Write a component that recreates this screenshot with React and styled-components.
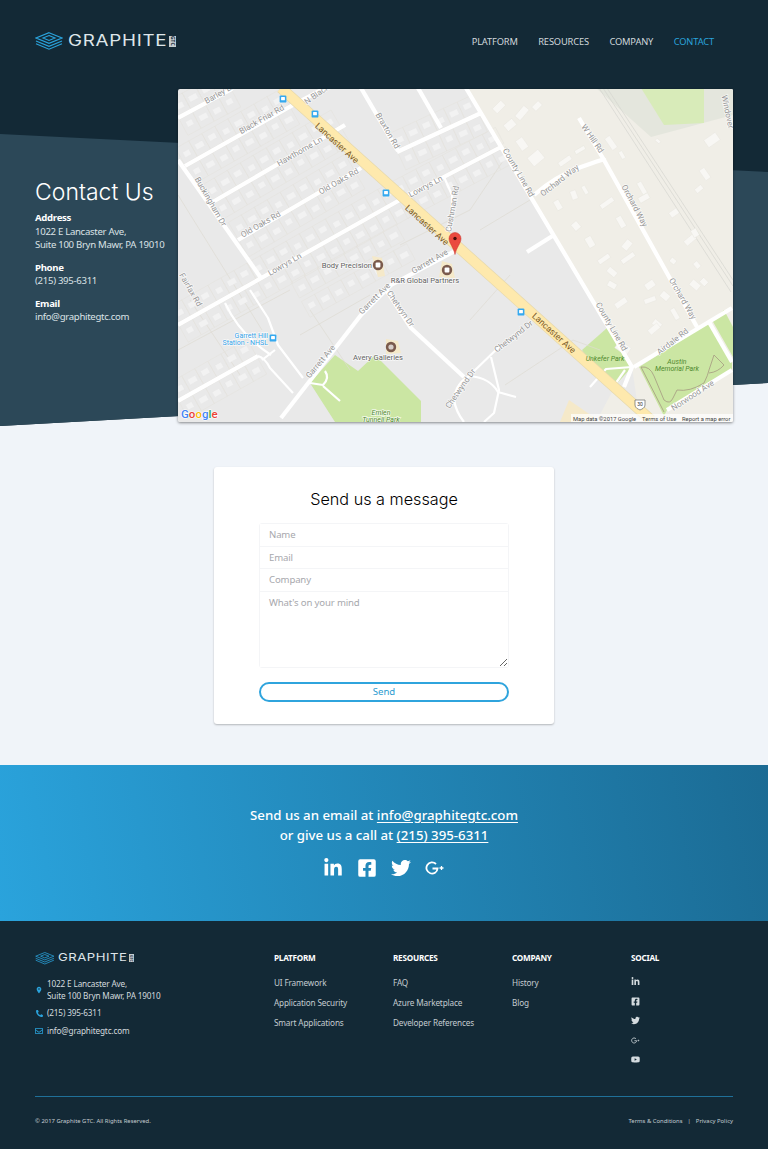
import styled, { createGlobalStyle } from "styled-components";
import {
	FaLinkedinIn,
	FaFacebookSquare,
	FaTwitter,
	FaYoutube,
	FaPhone,
	FaRegEnvelope,
} from "react-icons/fa";
import { MdLocationOn } from "react-icons/md";

const GlobalStyle = createGlobalStyle`
	* { box-sizing: border-box; }
	body {
		margin: 0;
		background: #f0f4f9;
		font-family: "Noto Sans", "Open Sans", sans-serif;
		color: #fff;
	}
	a { color: inherit; text-decoration: none; }
`;

const navItems = ["PLATFORM", "RESOURCES", "COMPANY", "CONTACT"];

const footerColumns = [
	{ title: "PLATFORM", links: ["UI Framework", "Application Security", "Smart Applications"] },
	{ title: "RESOURCES", links: ["FAQ", "Azure Marketplace", "Developer References"] },
	{ title: "COMPANY", links: ["History", "Blog"] },
];

const Hero = styled.section`
	position: relative;
	height: 426px;

	&::before,
	&::after {
		content: "";
		position: absolute;
		inset: 0;
	}
	&::before {
		background: #132936;
		clip-path: polygon(0 0, 100% 0, 100% 383px, 0 426px);
	}
	&::after {
		background: #2c4858;
		clip-path: polygon(0 134px, 100% 172px, 100% 383px, 0 426px);
	}
`;
const HeroInner = styled.div`
	position: relative;
	z-index: 1;
`;
const Header = styled.header`
	display: flex;
	align-items: flex-start;
	justify-content: space-between;
	height: 89px;
	padding: 32px 54px 0 35px;
`;
const LogoWrap = styled.div`
	display: flex;
	align-items: center;
	height: ${(p) => p.$size * 18}px;
	gap: ${(p) => p.$size * 5}px;
`;
const LogoWord = styled.span`
	display: inline-block;
	width: ${(p) => p.$size * 100}px;
	font-family: "Inter", sans-serif;
	font-weight: 400;
	font-size: ${(p) => p.$size * 15.4}px;
	line-height: 1;
	letter-spacing: ${(p) => p.$size * 0.6}px;
	color: #dfe6ea;
	transform: scaleX(1.22);
	transform-origin: left center;
	white-space: nowrap;
`;
const LogoBadge = styled.span`
	display: flex;
	align-items: center;
	justify-content: center;
	margin-left: ${(p) => p.$size * -4}px;
	width: ${(p) => p.$size * 7}px;
	height: ${(p) => p.$size * 11}px;
	background: #c6ced2;
	color: #132936;
	font-size: ${(p) => p.$size * 5}px;
	font-weight: 700;
	line-height: 1;
	writing-mode: vertical-rl;
	overflow: hidden;
`;
const Nav = styled.nav`
	display: flex;
	gap: 20.5px;
	padding-top: 2px;
`;
const NavLink = styled.a`
	font-size: 9.3px;
	letter-spacing: -0.15px;
	line-height: 16px;
	color: ${(p) => (p.$active ? "#2aa3dc" : "#d0d7db")};
`;
const HeroRow = styled.div`
	display: flex;
	padding: 0 35px;
`;
const ContactInfo = styled.div`
	width: 143px;
	padding-top: 89px;
	flex-shrink: 0;
`;
const HeroTitle = styled.h1`
	margin: 0 0 5px;
	font-family: "Inter", sans-serif;
	font-weight: 300;
	font-size: 23px;
	line-height: 28px;
	color: #fff;
	white-space: nowrap;
`;
const InfoBlock = styled.div`
	margin-bottom: 9px;
	font-size: 9.6px;
	letter-spacing: -0.3px;
	line-height: 13.5px;
	color: #dbe2e6;
	white-space: nowrap;
`;
const InfoLabel = styled.div`
	font-weight: 700;
	color: #fff;
`;
const MapFrame = styled.div`
	width: 555px;
	height: 333px;
	flex-shrink: 0;
	border-radius: 2px;
	overflow: hidden;
	box-shadow: 0 1px 3px rgba(0, 0, 0, 0.45);
	line-height: 0;
`;
const FormSection = styled.section`
	display: flex;
	justify-content: center;
	padding: 41px 0;
`;
const FormCard = styled.form`
	width: 340px;
	height: 257px;
	padding: 20px 45px 0;
	background: #fff;
	border-radius: 3px;
	box-shadow: 0 1px 2px rgba(0, 0, 0, 0.25);
`;
const FormTitle = styled.h2`
	margin: 0 0 12px;
	font-family: "Inter", sans-serif;
	font-weight: 300;
	font-size: 16.2px;
	line-height: 24px;
	text-align: center;
	color: #000;
`;
const FieldGroup = styled.div`
	display: flex;
	flex-direction: column;
	border: 1px solid #f4f5f7;
	border-radius: 3px;
`;
const fieldStyles = `
	display: block;
	width: 100%;
	border: 0;
	border-bottom: 1px solid #f4f5f7;
	outline: 0;
	background: #fff;
	padding: 0 9px;
	font-family: "Noto Sans", sans-serif;
	font-size: 9.6px;
	letter-spacing: -0.15px;
	color: #333;
	&::placeholder { color: #a7a8ad; opacity: 1; }
`;
const Input = styled.input`
	${fieldStyles}
	height: 22.6px;
`;
const TextArea = styled.textarea`
	${fieldStyles}
	height: 75px;
	padding-top: 4px;
	line-height: 14px;
	border-bottom: 0;
	resize: vertical;
`;
const SendButton = styled.button`
	display: block;
	width: 100%;
	height: 20px;
	margin-top: 14px;
	padding: 0;
	background: #fff;
	border: 2px solid #2fa4dd;
	border-radius: 10px;
	font-family: "Noto Sans", sans-serif;
	font-size: 9.6px;
	line-height: 16px;
	color: #2a9bd0;
`;
const Cta = styled.section`
	height: 156px;
	padding-top: 40px;
	background: linear-gradient(80deg, #2aa3dc 0%, #1b6b94 100%);
	text-align: center;
`;
const CtaText = styled.p`
	margin: 0;
	font-size: 13.25px;
	line-height: 20px;
	font-weight: 500;
	color: #fff;
`;
const CtaLink = styled.a`
	text-decoration: underline;
	text-underline-offset: 2px;
`;
const CtaSocial = styled.div`
	display: flex;
	justify-content: center;
	align-items: center;
	gap: 14px;
	margin-top: 13px;
	font-size: 20px;
	line-height: 0;
`;
const Footer = styled.footer`
	height: 228px;
	padding: 31px 35px 0;
	background: #132936;
`;
const FooterTop = styled.div`
	display: grid;
	grid-template-columns: 239px 119px 119px 119px 1fr;
	height: 144px;
`;
const ContactList = styled.ul`
	list-style: none;
	margin: 13px 0 0;
	padding: 0;
	display: flex;
	flex-direction: column;
	gap: 5.5px;
`;
const ContactRow = styled.li`
	display: flex;
	align-items: center;
	gap: 4px;
	font-size: 8.2px;
	letter-spacing: -0.15px;
	line-height: 12px;
	color: #d4dbdf;
	white-space: nowrap;
`;
const ContactIcon = styled.span`
	display: flex;
	justify-content: center;
	width: 8px;
	font-size: ${(p) => p.$size}px;
	color: #2aa3dc;
	line-height: 0;
`;
const ColumnTitle = styled.h4`
	margin: 0 0 13px;
	font-size: 8.2px;
	letter-spacing: -0.25px;
	line-height: 12px;
	font-weight: 700;
	color: #fff;
`;
const ColumnLink = styled.a`
	display: block;
	margin-bottom: 7.8px;
	font-size: 8.2px;
	letter-spacing: -0.15px;
	line-height: 12px;
	color: #c4ccd1;
	white-space: nowrap;
`;
const SocialList = styled.div`
	display: flex;
	flex-direction: column;
	gap: 10.6px;
	margin-top: 2px;
	font-size: 9px;
	line-height: 0;
	color: #d4dbdf;
`;
const FooterBottom = styled.div`
	display: flex;
	justify-content: space-between;
	padding-top: 19px;
	border-top: 1px solid #1f7099;
	font-size: 5.9px;
	line-height: 10px;
	color: #c4ccd1;
`;
const Divider = styled.span`
	margin: 0 5px;
`;

function LogoMark({ size }) {
	return (
		<svg width={28 * size} height={18 * size} viewBox="0 0 28 18" fill="none" stroke="#2aa3dc" strokeWidth="1.1">
			<path d="M14 .7 27 6 14 11.3 1 6Z" />
			<path d="M14 3.6 20 6 14 8.4 8 6Z" />
			<path d="M1 9 14 14.3 27 9" />
			<path d="M1 11.7 14 17.2 27 11.7" />
		</svg>
	);
}

function GooglePlusIcon() {
	return (
		<svg width="1em" height="1em" viewBox="0 0 20 20" fill="none" stroke="currentColor">
			<path d="M11 6A5.6 5.6 0 1 0 12.6 10.5H7.5" strokeWidth="1.8" />
			<path d="M16.5 8v4M14.5 10h4" strokeWidth="1.3" />
		</svg>
	);
}

function Logo({ size = 1 }) {
	return (
		<LogoWrap $size={size}>
			<LogoMark size={size} />
			<LogoWord $size={size}>GRAPHITE</LogoWord>
			<LogoBadge $size={size}>GTC</LogoBadge>
		</LogoWrap>
	);
}

const blockStreets = [
	[178, 118, 232, 89],
	[185, 166, 293, 105],
	[211, 203, 345, 125],
	[238, 240, 361, 168],
	[178, 325, 398, 201],
	[398, 201, 501, 147],
	[397, 152, 481, 113],
	[178, 401, 258, 356],
	[300, 300, 400, 245],
];

// lot + little house on both sides of a street
function lotsAlong([x1, y1, x2, y2]) {
	const len = Math.hypot(x2 - x1, y2 - y1);
	const ux = (x2 - x1) / len;
	const uy = (y2 - y1) / len;
	const angle = (Math.atan2(uy, ux) * 180) / Math.PI;
	const out = [];
	for (let d = 8, i = 0; d < len; d += 15, i++) {
		for (const side of [-1, 1]) {
			const place = (off) => [x1 + ux * d - uy * off, y1 + uy * d + ux * off];
			const [lx, ly] = place(side * 11);
			const [cx, cy] = place(side * (10 + (i % 3)));
			out.push({
				lx,
				ly,
				cx,
				cy,
				w: 7 + ((i * 5) % 3),
				h: 6 + ((i * 3) % 3),
				angle,
			});
		}
	}
	return out;
}

const beigeHouses = [
	[499, 107, 12, 7, -45], [522, 113, 14, 7, -50], [537, 106, 9, 6, -45], [510, 125, 11, 8, -40],
	[522, 144, 12, 8, 55], [536, 158, 14, 11, -40], [565, 161, 14, 5, -35], [580, 150, 11, 4, -30],
	[558, 205, 10, 6, 60], [574, 195, 9, 6, 70], [585, 190, 9, 4, 60], [576, 226, 8, 7, 50],
	[590, 242, 11, 7, 60], [607, 203, 15, 5, -35], [621, 222, 12, 6, 60], [627, 245, 10, 7, -50],
	[628, 258, 15, 5, -35], [604, 259, 13, 5, -35], [612, 272, 10, 6, 40], [612, 285, 9, 6, 30],
	[621, 303, 13, 6, -35], [650, 285, 10, 7, -35], [650, 300, 12, 5, -20], [665, 296, 9, 7, 40],
	[675, 314, 12, 5, 60], [657, 324, 9, 6, 40], [654, 329, 12, 6, -40], [695, 285, 10, 7, 40],
	[704, 282, 7, 6, 45], [697, 265, 7, 5, 50], [673, 261, 6, 5, 40], [690, 240, 12, 6, -40],
	[695, 233, 6, 8, -30], [674, 213, 9, 6, -35], [644, 198, 11, 6, -30], [658, 141, 5, 3, 40],
	[611, 143, 14, 6, 55], [622, 155, 8, 4, 60], [712, 140, 14, 9, -35], [699, 189, 8, 5, -40],
	[705, 174, 12, 6, 55], [642, 188, 13, 5, 60], [623, 348, 14, 9, 35],
];

const whiteRoads = [
	"M178 118 232 89",
	"M185 166 293 105 325 88",
	"M211 203 345 125",
	"M238 240 361 168",
	"M178 325 398 201 501 147",
	"M178 160 261 278",
	"M397 152 481 113",
	"M361 88 398 151",
	"M418 88 441 128",
	"M178 401 258 356",
	"M281 418 361 315 391 285 455 251",
	"M385 288 411 328 464 377",
	"M466 88 632 367 624 387",
	"M534 195 Q556 176 581 167 T604 160",
	"M579 118 604 160 697 327",
	"M634 367 732 308",
	"M527 252 554 235",
	"M709 322 732 362",
	"M667 410 732 370",
];

const thinRoads = [
	"M225 303 Q240 335 271 355",
	"M250 290 268 318 278 345 303 378",
	"M258 356 Q265 358 270 368 L293 393",
	"M262 360 275 350",
	"M444 177 452 195 452 225 444 240",
	"M472 373 499 347",
	"M454 400 Q456 382 470 376 Q490 378 498 392 L516 397",
	"M491 357 499 390 494 413 484 422",
	"M454 400 Q456 412 464 422",
	"M323 386 340 401",
	"M310 383 323 385 Q330 378 325 371",
	"M611 390 625 370",
	"M590 387 606 369 632 367",
];

const labels = [
	["Barley Ln", 220, 96, -30],
	["Black Friar Rd", 262, 122, -30],
	["N Black", 317, 97, -35],
	["Braxton Rd", 387, 133, 60],
	["Hawthorne Ln", 300, 154, -30],
	["Old Oaks Rd", 339, 184, -30],
	["Old Oaks Rd", 261, 227, -30],
	["Lowrys Ln", 285, 267, -30],
	["Lowrys Ln", 426, 189, -28],
	["Buckingham Dr", 210, 204, 60],
	["Fairfax Rd", 190, 292, 60],
	["Cushman Rd", 453, 211, -80],
	["Garrett Ave", 430, 264, -30],
	["Garrett Ave", 375, 301, -45],
	["Garrett Ave", 321, 364, -50],
	["Chetwyn Dr", 400, 311, 55],
	["Chetwynd Dr", 461, 391, -55],
	["Chetwynd Dr", 514, 339, -38],
	["County Line Rd", 518, 175, 60],
	["County Line Rd", 611, 329, 60],
	["Orchard Way", 560, 183, -38],
	["Orchard Way", 634, 208, 62],
	["Orchard Way", 682, 301, 60],
	["W Hill Rd", 592, 141, 55],
	["Airdale Rd", 673, 344, -38],
	["Norwood Ave", 693, 398, -33],
	["Windover", 727, 114, 78],
];

const transitStops = [
	[283, 99],
	[315, 114],
	[386, 193],
	[521, 312],
	[273, 338],
];

const pois = [
	[378, 265, 0],
	[447, 270, 0],
	[391, 347, 1],
];

const MapLabel = styled.text`
	font-family: "Roboto", sans-serif;
	font-size: ${(p) => p.$size || 8.2}px;
	font-style: ${(p) => (p.$park ? "italic" : "normal")};
	fill: ${(p) => p.$color || "#969696"};
	stroke: ${(p) => (p.$halo === false ? "none" : "rgba(255, 255, 255, 0.75)")};
	stroke-width: 1.4px;
	paint-order: stroke;
	text-anchor: ${(p) => p.$anchor || "middle"};
`;

function MapDrawing() {
	const lots = blockStreets.flatMap(lotsAlong);
	return (
		<svg width="555" height="333" viewBox="178 89 555 333">
			<rect x="178" y="89" width="555" height="333" fill="#e9e9e9" />
			<path d="M466 88H733V422H640L632 367Z" fill="#f0eee7" />
			<path d="M596 88H733V115L651 137Z" fill="#e4e6dd" />
			<path d="M641 88 664 125 704 123V88Z" fill="#d8ebb9" />
			<path d="M335 355 358 371 375 355 421 401V422H335L310 383Z" fill="#cbe6a3" />
			<path d="M582 350 607 328 632 367 611 390Z" fill="#cbe6a3" />
			<path d="M639 367 709 323 732 363V370L667 410 664 416Z" fill="#cbe6a3" />
			<path d="M712 320 724 310 733 327V357Z" fill="#cbe6a3" />
			<path d="M596 422H640L625 392 612 392Z" fill="#f0eee7" />
			<path d="M569 400 595 418 590 422H560Z" fill="#f5e9c9" />

			<g stroke="#dedbd3" strokeWidth="0.7" fill="none">
				<path d="M178 195 262 330M190 300 240 375M310 310 350 370" />
				<path d="M300 335 370 295M178 350 290 290" />
				<path d="M400 245 470 210 505 158M480 230 530 200M505 385 573 340 600 350M470 320 510 275" />
				<path d="M599 88 731 292M603 88 733 286M607 88 733 280" stroke="#d5d5d0" />
			</g>

			{lots.map((h, i) => (
				<g key={i}>
					<rect
						x={h.lx - 7.5}
						y={h.ly - 9}
						width="15"
						height="18"
						fill="none"
						stroke="#e4e2dd"
						strokeWidth="0.5"
						transform={`rotate(${h.angle} ${h.lx} ${h.ly})`}
					/>
					<rect
						x={h.cx - h.w / 2}
						y={h.cy - h.h / 2}
						width={h.w}
						height={h.h}
						fill="#f2f2f2"
						stroke="#e6e6e6"
						strokeWidth="0.4"
						transform={`rotate(${h.angle} ${h.cx} ${h.cy})`}
					/>
				</g>
			))}
			{beigeHouses.map(([cx, cy, w, h, a], i) => (
				<rect
					key={i}
					x={cx - w / 2}
					y={cy - h / 2}
					width={w}
					height={h}
					fill="#f8f7f4"
					stroke="#e5e3dc"
					strokeWidth="0.4"
					transform={`rotate(${a} ${cx} ${cy})`}
				/>
			))}

			<path
				d="M641 367 664 412M641 367Q650 366 654 376L664 400Q670 405 673 398L677 390Q690 392 704 383Q708 375 709 370L714 355 724 365Q718 372 709 373"
				fill="none"
				stroke="#a9a184"
				strokeWidth="0.9"
			/>

			<g fill="none" stroke="#fff" strokeLinecap="butt" strokeLinejoin="round">
				{whiteRoads.map((d, i) => (
					<path key={i} d={d} strokeWidth="4.2" />
				))}
				{thinRoads.map((d, i) => (
					<path key={i} d={d} strokeWidth="2.2" />
				))}
			</g>
			<path d="M281 88 651 420" stroke="#e6d8ad" strokeWidth="11" fill="none" />
			<path d="M281 88 651 420" stroke="#fee9ad" strokeWidth="9.6" fill="none" />

			<path d="M372 256l10 2 3 18-7 1ZM442 261l10 3 3 14-16-1ZM386 339l12 2 3 12-15 1Z" fill="#f5e9c9" />
			{pois.map(([x, y, kind]) => (
				<g key={x}>
					<circle cx={x} cy={y} r="5.2" fill="#7a5a4c" />
					{kind === 0 ? (
						<rect x={x - 2.4} y={y - 2.4} width="4.8" height="4.8" rx="1" fill="#fff" />
					) : (
						<circle cx={x} cy={y} r="2.6" fill="#d8cfc8" />
					)}
				</g>
			))}

			{transitStops.map(([x, y]) => (
				<g key={x}>
					<rect x={x - 3.4} y={y - 3.6} width="6.8" height="7.2" rx="1.2" fill="#35a9ef" />
					<rect x={x - 1.9} y={y - 2.1} width="3.8" height="3.4" rx="0.6" fill="#fff" />
				</g>
			))}

			{labels.map(([text, x, y, angle], i) => (
				<MapLabel key={i} x={x} y={y} transform={`rotate(${angle} ${x} ${y - 2})`}>
					{text}
				</MapLabel>
			))}
			{[
				[337, 146],
				[427, 228],
				[554, 336],
			].map(([x, y]) => (
				<MapLabel
					key={x}
					x={x}
					y={y}
					$color="#7b5a25"
					$size={8.8}
					$halo={false}
					transform={`rotate(42 ${x} ${y - 3})`}
				>
					Lancaster Ave
				</MapLabel>
			))}

			<MapLabel x={372} y={268} $anchor="end" $color="#5f5f5f" $size={7.6}>Body Precision</MapLabel>
			<MapLabel x={425} y={283} $color="#5f5f5f" $size={7.6}>{"R&R Global Partners"}</MapLabel>
			<MapLabel x={378} y={360} $color="#5f5f5f" $size={7.6}>Avery Galleries</MapLabel>
			<MapLabel x={268} y={338} $anchor="end" $color="#36a3e8" $size={7}>Garrett Hill</MapLabel>
			<MapLabel x={268} y={345} $anchor="end" $color="#36a3e8" $size={7}>Station - NHSL</MapLabel>
			<MapLabel x={381} y={415} $color="#4f8a2f" $size={7} $park>Emlen</MapLabel>
			<MapLabel x={381} y={422} $color="#4f8a2f" $size={7} $park>Tunnell Park</MapLabel>
			<MapLabel x={605} y={361} $color="#4f8a2f" $size={7} $park $halo={false}>Unkefer Park</MapLabel>
			<MapLabel x={677} y={364} $color="#4f8a2f" $size={7} $park $halo={false}>Austin</MapLabel>
			<MapLabel x={677} y={371} $color="#4f8a2f" $size={7} $park $halo={false}>Memorial Park</MapLabel>

			<path d="M635 400h10v5c0 3-3 4-5 5-2-1-5-2-5-5Z" fill="#fff" stroke="#666" strokeWidth="0.7" />
			<MapLabel x={640} y={406} $color="#333" $size={5} $halo={false}>30</MapLabel>

			<path
				d="M455 254.5C453.5 247 449 243.5 449 238.5a6 6 0 1 1 12 0C461 243.5 456.5 247 455 254.5Z"
				fill="#ea4a3f"
				stroke="#c9352c"
				strokeWidth="0.5"
			/>
			<circle cx="455" cy="238.5" r="1.7" fill="#4a0d0a" />

			<rect x="571" y="414" width="162" height="8" fill="#fff" fillOpacity="0.7" />
			<MapLabel x={573} y={420.5} $anchor="start" $color="#444" $size={5.8} $halo={false}>Map data ©2017 Google</MapLabel>
			<MapLabel x={642} y={420.5} $anchor="start" $color="#444" $size={5.8} $halo={false}>Terms of Use</MapLabel>
			<MapLabel x={682} y={420.5} $anchor="start" $color="#444" $size={5.8} $halo={false}>Report a map error</MapLabel>

			<text x="181" y="418" fontFamily="Roboto, sans-serif" fontSize="11.5" fontWeight="500" stroke="#fff" strokeWidth="1.2" paintOrder="stroke">
				<tspan fill="#4285f4">G</tspan>
				<tspan fill="#ea4335">o</tspan>
				<tspan fill="#fbbc05">o</tspan>
				<tspan fill="#4285f4">g</tspan>
				<tspan fill="#34a853">l</tspan>
				<tspan fill="#ea4335">e</tspan>
			</text>
		</svg>
	);
}

function App() {
	return (
		<>
			<GlobalStyle />
			<Hero>
				<HeroInner>
					<Header>
						<Logo />
						<Nav>
							{navItems.map((item) => (
								<NavLink key={item} href="#" $active={item === "CONTACT"}>
									{item}
								</NavLink>
							))}
						</Nav>
					</Header>
					<HeroRow>
						<ContactInfo>
							<HeroTitle>Contact Us</HeroTitle>
							<InfoBlock>
								<InfoLabel>Address</InfoLabel>
								1022 E Lancaster Ave,
								<br />
								Suite 100 Bryn Mawr, PA 19010
							</InfoBlock>
							<InfoBlock>
								<InfoLabel>Phone</InfoLabel>
								(215) 395-6311
							</InfoBlock>
							<InfoBlock>
								<InfoLabel>Email</InfoLabel>
								info@graphitegtc.com
							</InfoBlock>
						</ContactInfo>
						<MapFrame>
							<MapDrawing />
						</MapFrame>
					</HeroRow>
				</HeroInner>
			</Hero>

			<FormSection>
				<FormCard>
					<FormTitle>Send us a message</FormTitle>
					<FieldGroup>
						<Input placeholder="Name" />
						<Input placeholder="Email" />
						<Input placeholder="Company" />
						<TextArea placeholder="What's on your mind" />
					</FieldGroup>
					<SendButton type="button">Send</SendButton>
				</FormCard>
			</FormSection>

			<Cta>
				<CtaText>
					Send us an email at <CtaLink href="#">info@graphitegtc.com</CtaLink>
				</CtaText>
				<CtaText>
					or give us a call at <CtaLink href="#">(215) 395-6311</CtaLink>
				</CtaText>
				<CtaSocial>
					<FaLinkedinIn />
					<FaFacebookSquare />
					<FaTwitter />
					<GooglePlusIcon />
				</CtaSocial>
			</Cta>

			<Footer>
				<FooterTop>
					<div>
						<Logo size={0.7} />
						<ContactList>
							<ContactRow>
								<ContactIcon $size={12}>
									<MdLocationOn />
								</ContactIcon>
								<span>
									1022 E Lancaster Ave,
									<br />
									Suite 100 Bryn Mawr, PA 19010
								</span>
							</ContactRow>
							<ContactRow>
								<ContactIcon $size={7}>
									<FaPhone style={{ transform: "scaleX(-1)" }} />
								</ContactIcon>
								(215) 395-6311
							</ContactRow>
							<ContactRow>
								<ContactIcon $size={8}>
									<FaRegEnvelope />
								</ContactIcon>
								info@graphitegtc.com
							</ContactRow>
						</ContactList>
					</div>
					{footerColumns.map((col) => (
						<div key={col.title}>
							<ColumnTitle>{col.title}</ColumnTitle>
							{col.links.map((link) => (
								<ColumnLink key={link} href="#">
									{link}
								</ColumnLink>
							))}
						</div>
					))}
					<div>
						<ColumnTitle>SOCIAL</ColumnTitle>
						<SocialList>
							<FaLinkedinIn />
							<FaFacebookSquare />
							<FaTwitter />
							<GooglePlusIcon />
							<FaYoutube />
						</SocialList>
					</div>
				</FooterTop>
				<FooterBottom>
					<span>© 2017 Graphite GTC. All Rights Reserved.</span>
					<span>
						Terms &amp; Conditions
						<Divider>|</Divider>
						Privacy Policy
					</span>
				</FooterBottom>
			</Footer>
		</>
	);
}

export default App;
